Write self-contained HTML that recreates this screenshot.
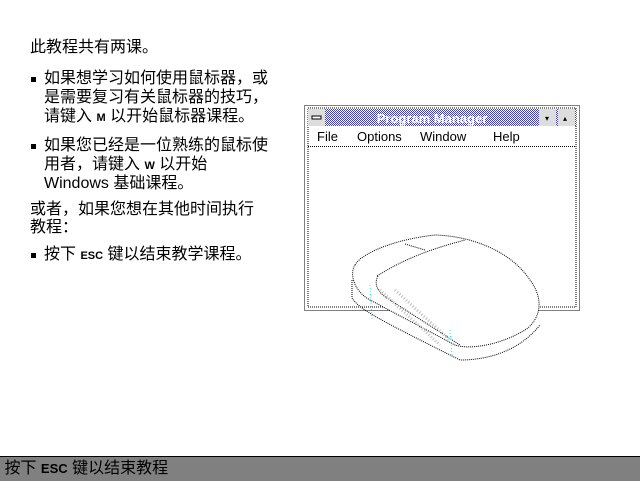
<html><head><style>
body{margin:0;width:640px;height:480px;background:#fff;position:relative;overflow:hidden;font-family:"Liberation Sans","Noto Sans CJK SC","WenQuanYi Zen Hei",sans-serif;font-size:16px;color:#000}
.t{position:absolute;left:30px;white-space:nowrap;line-height:19px;height:19px}
.b{position:absolute;left:31px;width:5px;height:5px;background:#000}
.k{font-weight:bold;font-size:11px}
#bar{position:absolute;left:0;top:456px;width:640px;height:24px;background:#808080;border-top:1px solid #000;font-size:16px;line-height:23px}
</style></head><body>
<div class="t" style="top:38px">此教程共有两课。</div>
<div class="b" style="top:77px"></div>
<div class="t" style="left:44px;top:69px">如果想学习如何使用鼠标器，或</div>
<div class="t" style="left:44px;top:88px">是需要复习有关鼠标器的技巧，</div>
<div class="t" style="left:44px;top:107px">请键入 <span class="k">M</span> 以开始鼠标器课程。</div>
<div class="b" style="top:144px"></div>
<div class="t" style="left:44px;top:136px">如果您已经是一位熟练的鼠标使</div>
<div class="t" style="left:44px;top:155px">用者，请键入 <span class="k">W</span> 以开始</div>
<div class="t" style="left:44px;top:174px">Windows 基础课程。</div>
<div class="t" style="top:200px">或者，如果您想在其他时间执行</div>
<div class="t" style="top:218px">教程：</div>
<div class="b" style="top:253px"></div>
<div class="t" style="left:44px;top:245px">按下 <span class="k">ESC</span> 键以结束教学课程。</div>
<svg style="position:absolute;left:0;top:0" width="640" height="480">
<defs><pattern id="d" width="2" height="2" patternUnits="userSpaceOnUse"><rect width="2" height="2" fill="#fff"/><rect width="1" height="1" fill="#4040c0"/><rect x="1" y="1" width="1" height="1" fill="#4040c0"/></pattern></defs>
<rect x="304.5" y="105.5" width="275" height="205" fill="#fff" stroke="#000" stroke-dasharray="1 1"/>
<rect x="308" y="108" width="268" height="199" fill="none" stroke="#000" stroke-dasharray="1 1"/>
<rect x="308" y="109" width="268" height="17" fill="url(#d)"/>
<rect x="308" y="109" width="17" height="17" fill="#ddd"/>
<rect x="312" y="116" width="9" height="3" fill="#fff" stroke="#000"/>
<rect x="539" y="109" width="17" height="17" fill="#ddd"/><rect x="558" y="109" width="17" height="17" fill="#ddd"/>
<text x="545" y="121" font-size="8">▾</text><text x="563" y="121" font-size="8">▴</text>
<text x="432" y="123" text-anchor="middle" fill="#fff" font-size="13" font-weight="bold" font-family="Liberation Sans">Program Manager</text>
<text y="141" font-size="13" font-family="Liberation Sans"><tspan x="317">File</tspan><tspan x="357">Options</tspan><tspan x="420">Window</tspan><tspan x="493">Help</tspan></text>
<line x1="308" y1="146.5" x2="576" y2="146.5" stroke="#000" stroke-dasharray="1 1"/>
<path d="M355,265 C360,255 390,240 435,235 C470,236 510,250 530,280 C545,300 540,320 525,330 C500,345 470,350 455,345 L370,300 C352,290 350,272 355,265Z" fill="#fff" stroke="#000" stroke-dasharray="1 1"/>
<path d="M352,280 L352,298 C360,310 380,320 460,360 C490,360 520,350 540,325" fill="none" stroke="#000" stroke-dasharray="1 1"/>
<path d="M377,276 C400,262 420,252 465,240 M405,244 L425,250 M378,276 C374,283 376,292 390,300 L460,345" fill="none" stroke="#000" stroke-dasharray="1 1"/>
<path d="M370,285 L372,320 M450,330 L452,355" stroke="#0ff" stroke-dasharray="1 2"/>
<path d="M380,290 L440,345 M395,290 L450,340" stroke="#bbb" stroke-width="3" stroke-dasharray="1 2"/>
</svg>
<div id="bar">&nbsp;按下 <b style="font-size:13px">ESC</b> 键以结束教程</div>
</body></html>
